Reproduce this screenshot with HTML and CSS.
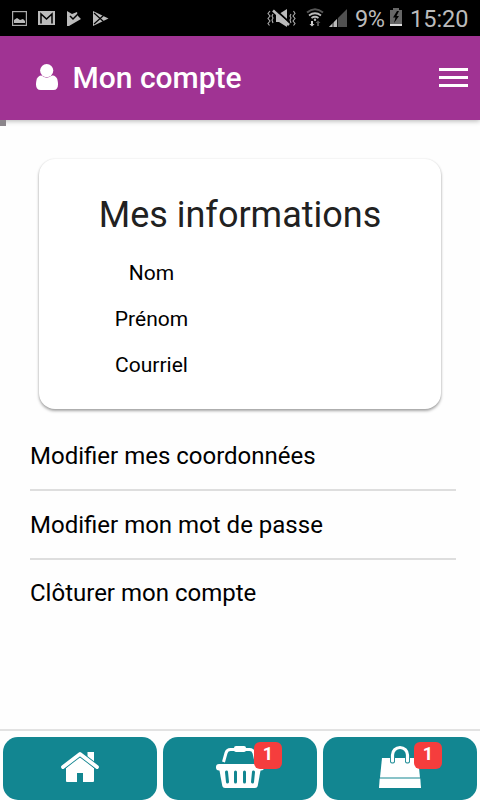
FILE: index.html
```html
<!DOCTYPE html>
<html lang="fr">
<head>
    <meta charset="UTF-8">
    <meta name="viewport" content="width=device-width, initial-scale=1.0">
    <title>Mon compte</title>
    <link rel="stylesheet" href="styles.css">
</head>
<body>
    <div class="status-bar">
        <svg class="notifs" width="110" height="36" viewBox="0 0 110 36">
            <rect x="12.600" y="11.600" width="13.800" height="13.800" fill="none" stroke="#aaa" stroke-width="1.200"/>
            <path d="M14 23v-3l3-2 3 2 3-1 2 2v2z" fill="#bbb"/>
            <path d="M38 11h17v14H38z" fill="#bbb"/>
            <path d="M41 23.500V14l5.500 5 5.500-5v9.500" fill="none" stroke="#000" stroke-width="1.500"/>
            <path d="M67 11l5 3 5-2 1 4 3 3-12 7h-2z" fill="#bbb"/>
            <path d="M70 16l3 3 6-6" fill="none" stroke="#000" stroke-width="1.500"/>
            <path d="M93 11l15.500 7.500L93 26z" fill="#bbb"/>
            <path d="M94 13l10 9M94 24l10-9" stroke="#000" stroke-width="1.200"/>
        </svg>
        <div class="status-right">
            <svg width="82" height="36" viewBox="0 0 82 36">
                <path d="M2 11l-2 2.500 2 2.500-2 2.500 2 2.500-2 2.500 1.500 2M5 14l-1 2 1 2-1 2 1 3M23 14l-1 2 1 2-1 2 1 3M25.500 11l1.500 2.500-2 2.500 2 2.500-2 2.500 2 2.500-1.500 2" fill="none" stroke="#aaa" stroke-width="1.100"/>
                <path d="M8 14h3l8-5v18l-8-5H8z" fill="#bbb"/>
                <path d="M7 9.500l14 12.500" stroke="#000" stroke-width="2"/>
                <path d="M5 10.500l16 14.500" stroke="#bbb" stroke-width="2.600"/>
                <path d="M39 12.500q8-6.500 16 0" fill="none" stroke="#555" stroke-width="2"/>
                <path d="M41 15.500q6-4.500 12 0M43.500 18q3.500-2.500 7 0" fill="none" stroke="#bbb" stroke-width="1.800"/>
                <circle cx="47" cy="19.800" r="1.200" fill="#bbb"/>
                <path d="M43 21h2v3h1.500L44 26.500 41.500 24H43z" fill="#ccc"/>
                <path d="M49 26v-3h-1.500l2.500-2.500 2.500 2.500H51v3z" fill="#555"/>
                <path d="M61 27L79 9v18z" fill="#505050"/>
                <path d="M61 27l8-8v8z" fill="#bbb"/>
                <path d="M65 18v9M69.500 15v12" stroke="#000" stroke-width=".8"/>
            </svg>
            <span class="battery">9%</span>
            <svg class="battery-icon" width="12" height="18" viewBox="0 0 12 18">
                <path d="M0 2h3V0h6v2h3v16H0z" fill="#666"/>
                <path d="M0 16h12v2H0z" fill="#ddd"/>
                <path d="M7 3L3 9.500h2.500L4 15l5-7H6.500L9 3z" fill="#000"/>
            </svg>
            <span class="time">15:20</span>
        </div>
    </div>

    <header class="header">
        <svg class="user-icon" width="22" height="26" viewBox="0 0 22 26">
            <path d="M5 11.500C1.500 12 0 15.500 0 20.500 0 24 1.500 26 4.500 26h13c3 0 4.500-2 4.500-5.500 0-5-1.500-8.500-5-9z" fill="#fff"/>
            <circle cx="10.700" cy="6.600" r="7.100" fill="#a03393"/>
            <circle cx="10.700" cy="6.600" r="6.600" fill="#fff"/>
        </svg>
        <h1>Mon compte</h1>
        <div class="burger">
            <span></span>
            <span></span>
            <span></span>
        </div>
    </header>

    <main class="content">
        <div class="marker"></div>
        <div class="card">
            <h2>Mes informations</h2>
            <p>Nom</p>
            <p>Prénom</p>
            <p>Courriel</p>
        </div>
        <ul class="list">
            <li>Modifier mes coordonnées</li>
            <li>Modifier mon mot de passe</li>
            <li>Clôturer mon compte</li>
        </ul>
    </main>

    <nav class="tabs">
        <div class="tab">
            <svg width="60" height="50" viewBox="0 0 60 50">
                <path d="M30 19L16 31v13q0 1 1 1h10v-9h6v9h10q1 0 1-1V31z" fill="#fff"/>
                <path d="M37.500 15h6.500v11l-6.500-6z" fill="#fff"/>
                <path d="M13 30L30 17l17 13" fill="none" stroke="#128691" stroke-width="5.500"/>
                <path d="M13 30L30 17l17 13" fill="none" stroke="#fff" stroke-width="3.800" stroke-linecap="round" stroke-linejoin="round"/>
            </svg>
        </div>
        <div class="tab">
            <svg width="60" height="50" viewBox="0 0 60 50">
                <path d="M13.500 25l2.500-9q1-3.500 4.500-3.500h19q3.500 0 4.500 3.500l2 9" fill="none" stroke="#fff" stroke-width="3"/>
                <rect x="24" y="9" width="12" height="6" rx="2" fill="#fff"/>
                <rect x="6" y="27" width="48" height="6.500" rx="3" fill="#fff"/>
                <path d="M9 31h42l-3.300 18q-.4 2-2.700 2H15q-2.300 0-2.700-2z" fill="#fff"/>
                <path d="M16.500 35l1 10M25.500 35v10M34.500 35v10M43.500 35l-1 10" stroke="#128691" stroke-width="3" stroke-linecap="round"/>
            </svg>
            <span class="badge">1</span>
        </div>
        <div class="tab">
            <svg width="60" height="50" viewBox="0 0 60 50">
                <path d="M12 21h36l2 19.500H10z" fill="#fff"/>
                <path d="M9.700 41.500h40.600l.7 9.500H9z" fill="#fff"/>
                <path d="M22.500 24v-6a7.500 7.500 0 0 1 15 0v6" fill="none" stroke="#128691" stroke-width="5" stroke-linecap="round"/>
                <path d="M22.500 24v-6a7.500 7.500 0 0 1 15 0v6" fill="none" stroke="#fff" stroke-width="3.200" stroke-linecap="round"/>
            </svg>
            <span class="badge">1</span>
        </div>
    </nav>
</body>
</html>
```

FILE: styles.css
```css
* {
    box-sizing: border-box;
}

body {
    margin: 0;
    height: 800px;
    display: flex;
    flex-direction: column;
    background-color: #fefefe;
    font-family: Roboto, sans-serif;
    color: #000;
    overflow: hidden;
}

svg {
    display: block;
    flex: none;
    overflow: visible;
}

h1, h2, p, ul {
    margin: 0;
    padding: 0;
    white-space: nowrap;
}

.status-bar {
    height: 36px;
    flex: none;
    display: flex;
    justify-content: space-between;
    background-color: #000;
    color: #bbb;
    font-size: 23.500px;
    line-height: 38px;
}

.status-right {
    display: flex;
    padding-right: 12px;
}

.battery {
    width: 30px;
    margin-left: 5px;
    letter-spacing: -0.5px;
}

.battery-icon {
    margin: 8px 8px 0 5px;
}

.time {
    width: 58px;
}

.header {
    height: 84px;
    flex: none;
    display: flex;
    align-items: center;
    padding: 0 12px 2px 36px;
    background-color: #a03393;
    color: #fff;
    box-shadow: 0 1px 5px rgba(0, 0, 0, 0.3);
    z-index: 1;
}

.header h1 {
    margin-left: 14.500px;
    font-size: 30px;
    font-weight: 500;
}

.burger {
    width: 29px;
    margin-left: auto;
    display: grid;
    gap: 5px;
}

.burger span {
    height: 3px;
    background-color: #fff;
}

.content {
    flex: 1;
}

.marker {
    width: 6px;
    height: 6px;
    background-color: #8b858b;
    position: relative;
    z-index: 2;
}

.card {
    width: 402px;
    height: 250px;
    margin: 33px 0 0 39px;
    padding-top: 35px;
    border-radius: 16px;
    background-color: #fff;
    box-shadow: 0 2px 3px rgba(0, 0, 0, 0.35), 0 0 2px rgba(0, 0, 0, 0.1);
}

.card h2 {
    font-size: 36px;
    font-weight: 400;
    line-height: 42px;
    text-align: center;
    color: #212121;
    margin-bottom: 14px;
}

.card p {
    width: 225px;
    height: 46px;
    line-height: 46px;
    font-size: 21px;
    text-align: center;
}

.list {
    margin: 13px 24px 0 30px;
    list-style: none;
    font-size: 24px;
}

.list li {
    height: 69px;
    line-height: 68px;
    border-bottom: 2px solid #dedede;
}

.list li:last-child {
    line-height: 66px;
    border-bottom: none;
}

.tabs {
    height: 71px;
    flex: none;
    display: flex;
    gap: 6px;
    padding: 6px 3px 0;
    border-top: 2px solid #e2e2e2;
}

.tab {
    flex: 1;
    height: 63px;
    display: flex;
    justify-content: center;
    border-radius: 15px;
    background-color: #128691;
    position: relative;
}

.badge {
    position: absolute;
    left: 91px;
    top: 5px;
    width: 28px;
    height: 27px;
    border-radius: 6px;
    background-color: #f53d3d;
    color: #fff;
    font-size: 18px;
    font-weight: 700;
    line-height: 24px;
    text-align: center;
}
```
